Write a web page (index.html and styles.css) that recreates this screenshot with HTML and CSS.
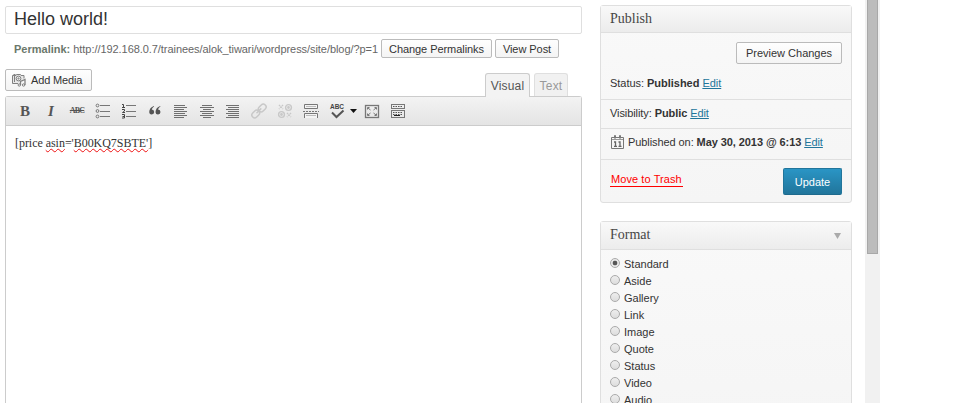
FILE: index.html
```html
<!DOCTYPE html>
<html lang="en">
<head>
<meta charset="utf-8">
<title>Edit Post</title>
<link rel="stylesheet" href="styles.css">
</head>
<body>
<div class="page">
  <main class="editor-column">
    <div class="post-title">Hello world!</div>
    <div class="permalink">
      <span class="permalink-text"><b>Permalink:</b> <span class="url">http://192.168.0.7/trainees/alok_tiwari/wordpress/site/blog/?p=1</span></span>
      <button class="button small change">Change Permalinks</button>
      <button class="button small view">View Post</button>
    </div>
    <div class="editor-tools">
      <button class="button add-media">
        <svg width="14" height="14" viewBox="0 0 14 14" fill="none" stroke="#808080"><path fill="#e8e8e8" d="M12 5.500v-3H9l-.5-1h-4l-.5 1H.500v8H6M1.500 1.500h2M2.500 3v6"/><circle cx="6.500" cy="5.500" r="2.400"/><circle cx="6.500" cy="5.500" r=".6"/><path stroke-width="1.300" d="M8.500 12V8.500l4.500-2V12"/><circle cx="7.300" cy="12" r="1.200"/><circle cx="11.600" cy="12" r="1.200"/></svg>
        <span>Add Media</span>
      </button>
      <div class="tabs">
        <div class="tab active">Visual</div>
        <div class="tab">Text</div>
      </div>
    </div>
    <section class="editor">
      <div class="toolbar">
        <span class="tool bold">B</span>
        <span class="tool italic">I</span>
        <span class="tool strike">ABC</span>
        <span class="tool"><svg width="16" height="16" viewBox="0 0 16 16" fill="none" stroke="#777"><circle cx="2.500" cy="2.500" r="1.400"/><circle cx="2.500" cy="8" r="1.400"/><circle cx="2.500" cy="13.500" r="1.400"/><path d="M5 2.500h10M5 8.500h10M5 13.500h10"/></svg></span>
        <span class="tool"><svg width="16" height="16" viewBox="0 0 16 16" fill="none" stroke="#777"><path d="M5 2.500h10M5 8.500h10M5 13.500h10"/><path stroke="#444" d="M1 1.500h1.500V4M1 4.500h3M1 6.500h2.500V8L1.500 9.500H4M1 11.500h2.500v3.500H1M1.500 13.500h2"/></svg></span>
        <span class="tool"><svg width="16" height="16" viewBox="0 0 16 16" fill="#555"><path d="M7 3C4 3.700 2.200 6.500 2.200 9.300a2.500 2.500 0 1 0 2.600-2.700C5 5.300 5.800 4.300 7 3.700zM13.300 3c-3 .7-4.800 3.500-4.800 6.300a2.500 2.500 0 1 0 2.600-2.700c.2-1.300 1-2.300 2.200-2.900z"/></svg></span>
        <span class="tool"><svg width="16" height="16" viewBox="0 0 16 16" stroke="#707070"><path d="M1 2.500h11M1 4.500h13M1 6.500h10M1 8.500h13M1 10.500h11M1 12.500h13M1 14.500h10"/></svg></span>
        <span class="tool"><svg width="16" height="16" viewBox="0 0 16 16" stroke="#707070"><path d="M3 2.500h10M1 4.500h14M4 6.500h8M1 8.500h14M3 10.500h10M1 12.500h14M4 14.500h8"/></svg></span>
        <span class="tool"><svg width="16" height="16" viewBox="0 0 16 16" stroke="#707070"><path d="M1 2.500h13M3 4.500h11M1 6.500h13M3 8.500h11M1 10.500h13M3 12.500h11M1 14.500h13"/></svg></span>
        <span class="tool"><svg width="16" height="16" viewBox="0 0 16 16" fill="none" stroke="#c8c8c8" stroke-width="1.500"><rect x="7" y="2.200" width="8.500" height="5.600" rx="2.800" transform="rotate(-45 11.200 5)"/><rect x=".5" y="8.200" width="8.500" height="5.600" rx="2.800" transform="rotate(-45 4.700 11)"/><path d="M5.500 10.200l4.800-4.800"/></svg></span>
        <span class="tool"><svg width="16" height="16" viewBox="0 0 16 16" fill="none" stroke="#c8c8c8" stroke-width="1.400"><circle cx="11.500" cy="4.500" r="2.900"/><circle cx="4.500" cy="11.500" r="2.900"/><circle cx="11.500" cy="4.500" r=".7"/><circle cx="4.500" cy="11.500" r=".7"/><path stroke-dasharray="1.500 1" d="M2 2l4 4M6 2L2 6M10 10l4 4M14 10l-4 4"/></svg></span>
        <span class="tool"><svg width="16" height="16" viewBox="0 0 16 16" fill="none" stroke="#777"><path fill="#f4f4f4" d="M1.500 5.500v-4h13v4zM1.500 15v-4.500h13V15"/><path stroke="#bbb" d="M3 3.500h10M3 12.500h10"/><path stroke-dasharray="2 1" d="M0 8.500h16"/></svg></span>
        <span class="tool"><svg width="16" height="16" viewBox="0 0 16 16" fill="none" stroke="#555" stroke-width="2"><text class="abc-label" x="1" y="6" textLength="14">ABC</text><path d="M3 9.500l4.500 4.500 7-6.500"/></svg></span>
        <span class="caret"></span>
        <span class="tool"><svg width="16" height="16" viewBox="0 0 16 16" fill="none" stroke="#777"><rect x="1.500" y="2.500" width="13" height="12" stroke-width="1.300"/><path d="M3.500 6.500v-2h2M10.500 4.500h2v2M3.500 10.500v2h2M10.500 12.500h2v-2M4 5l2.500 2M12 5L9.500 7M4 12l2.500-2M12 12l-2.500-2"/></svg></span>
        <span class="tool"><svg width="16" height="16" viewBox="0 0 16 16" fill="none" stroke="#777"><rect x="1.500" y="1.500" width="13" height="4"/><rect x="1.500" y="7.500" width="13" height="7"/><path stroke="#555" stroke-dasharray="1.500 1" d="M3 3.500h10M3 9.500h10M3 11.500h10"/><path stroke="#222" d="M4 12.500h6"/></svg></span>
      </div>
      <div class="content">[price <span class="misspelled">asin</span>='<span class="misspelled">B00KQ7SBTE'</span>]</div>
    </section>
  </main>
  <aside class="side-column">
    <section class="box publish">
      <h3>Publish</h3>
      <div class="row preview-row"><button class="button preview">Preview Changes</button></div>
      <div class="row status">Status: <b>Published</b> <a>Edit</a></div>
      <div class="row visibility">Visibility: <b>Public</b> <a>Edit</a></div>
      <div class="row date">
        <svg width="13" height="14" viewBox="0 0 13 14" fill="none" stroke="#777"><path d="M.5 2.500h12v11H.500z"/><path d="M1 4.500h11" stroke="#999"/><path d="M3.500 3.500v-3h1v3M8.500 3.500v-3h1v3"/><path stroke="#666" stroke-width="1.300" d="M3 7h1.500v4M3 11.400h3M7.500 7H9v4M7.500 11.400h3"/></svg>
        <span>Published on: <b>May 30, 2013 @ 6:13</b> <a>Edit</a></span>
      </div>
      <div class="actions"><a class="trash">Move to Trash</a><button class="update">Update</button></div>
    </section>
    <section class="box format">
      <h3>Format <i class="toggle"></i></h3>
      <div class="options">
        <label><i class="radio checked"></i>Standard</label>
        <label><i class="radio"></i>Aside</label>
        <label><i class="radio"></i>Gallery</label>
        <label><i class="radio"></i>Link</label>
        <label><i class="radio"></i>Image</label>
        <label><i class="radio"></i>Quote</label>
        <label><i class="radio"></i>Status</label>
        <label><i class="radio"></i>Video</label>
        <label><i class="radio"></i>Audio</label>
      </div>
    </section>
  </aside>
  <div class="scrollbar"><div class="thumb"></div></div>
</div>
</body>
</html>
```
FILE: styles.css
```css
* { box-sizing: border-box; }
body {
  margin: 0;
  overflow: hidden;
  background: #fff;
  color: #333;
  font: 11px/14px "Liberation Sans", Arial, sans-serif;
}
.page { display: flex; height: 403px; overflow: hidden; padding-left: 5px; }
.editor-column { display: flex; flex-direction: column; width: 577px; padding-top: 6px; }
.side-column { width: 252px; margin-left: 18px; padding-top: 5px; }

.post-title {
  height: 28px;
  padding: 0 8px;
  border: 1px solid #dfdfdf;
  border-radius: 2px;
  font-size: 18px;
  line-height: 24px;
}
.permalink { display: flex; height: 19px; margin-top: 5px; padding-left: 9px; color: #666; }
.permalink-text { width: 367px; line-height: 20px; white-space: nowrap; }
.permalink b { color: #6b786b; }
.url { letter-spacing: -0.06px; }

.button {
  padding: 0;
  border: 1px solid #bbb;
  border-radius: 2px;
  background: linear-gradient(#fefefe, #f4f4f4);
  color: #333;
  font: 11px/16px "Liberation Sans", Arial, sans-serif;
  white-space: nowrap;
}
.small { height: 19px; padding-top: 1px; line-height: 16px; letter-spacing: -0.06px; }
.change { width: 111px; }
.view { width: 64px; margin-left: 3px; }

.editor-tools { display: flex; justify-content: space-between; height: 27px; margin-top: 11px; }
.add-media { display: flex; align-items: center; width: 87px; height: 22px; padding-left: 6px; gap: 5px; letter-spacing: -0.15px; }
.tabs { display: flex; gap: 4px; padding: 4px 14px 0 0; }
.tab {
  width: 34px;
  height: 23px;
  border: 1px solid #dfdfdf;
  border-bottom: 0;
  border-radius: 3px 3px 0 0;
  background: #f1f1f1;
  color: #999;
  font-size: 12px;
  line-height: 24px;
  text-align: center;
  letter-spacing: 0.2px;
}
.tab.active { width: 45px; height: 24px; border-color: #ccc; background: #f3f3f3; color: #555; position: relative; z-index: 1; }

.editor { flex: 1; border: 1px solid #ccc; border-bottom: 0; border-radius: 3px 3px 0 0; }
.toolbar {
  display: flex;
  align-items: center;
  height: 29px;
  padding-left: 6px;
  border-bottom: 1px solid #ccc;
  background: linear-gradient(#f3f3f3, #e4e4e4);
}
.tool { display: flex; align-items: center; justify-content: center; width: 26px; height: 20px; color: #555; }
.tool svg { display: block; }
.bold, .italic { font: bold 15px/20px "Liberation Serif", serif; }
.italic { font-style: italic; }
.strike { font: bold 8px/20px "Liberation Serif", serif; text-decoration: line-through; letter-spacing: -0.8px; }
.abc-label { fill: #444; stroke: none; font: bold 6.5px "Liberation Sans", sans-serif; }
.caret { width: 7px; height: 4px; margin-right: 2px; background: #111; clip-path: polygon(0 0, 100% 0, 50% 100%); }
.content { padding: 9px 9px 0; font: 12px/16px "Liberation Serif", "Times New Roman", serif; letter-spacing: -0.04px; }
.misspelled { text-decoration: underline wavy #e11 1px; text-underline-offset: 1px; text-decoration-skip-ink: none; }

.box { border: 1px solid #dfdfdf; border-radius: 3px; background: linear-gradient(#f9f9f9, #f5f5f5); }
.box h3 {
  display: flex;
  align-items: center;
  justify-content: space-between;
  height: 28px;
  margin: 0;
  padding: 0 10px 1px 9px;
  border-bottom: 1px solid #dfdfdf;
  background: linear-gradient(#f9f9f9, #ececec);
  color: #464646;
  font: 14px/20px "Liberation Serif", Georgia, serif;
}
.publish { height: 198px; }
.publish h3 { height: 27px; }
.row { padding-left: 9px; border-bottom: 1px solid #dfdfdf; white-space: nowrap; letter-spacing: -0.03px; }
.row a { color: #21759b; text-decoration: underline; }
.preview-row { display: flex; justify-content: flex-end; height: 41px; padding: 9px 9px 0; border: 0; }
.preview { width: 106px; height: 22px; }
.status { height: 26px; padding-top: 2px; }
.visibility { height: 29px; padding-top: 6px; letter-spacing: -0.08px; }
.date { display: flex; gap: 4px; align-items: center; height: 31px; padding-bottom: 4px; letter-spacing: -0.08px; }
.date svg { margin-left: 1px; }
.actions { display: flex; justify-content: space-between; padding: 8px 9px 0; }
.trash { height: 15px; margin-top: 4px; padding: 0 1px; border-bottom: 1px solid #f00; color: #f00; letter-spacing: 0.08px; }
.update {
  width: 59px;
  height: 27px;
  padding: 0;
  border: 1px solid #21759b;
  border-bottom-color: #1e6a8d;
  border-radius: 2px;
  background: linear-gradient(#2a95c5, #21759b);
  color: #fff;
  font: 11px/24px "Liberation Sans", Arial, sans-serif;
}
.format { height: 220px; margin-top: 18px; }
.toggle { width: 7px; height: 6px; margin-top: 2px; background: #aaa; clip-path: polygon(0 0, 100% 0, 50% 100%); }
.options { padding: 6px 9px; }
.options label { display: flex; height: 17px; line-height: 17px; }
.radio {
  width: 10px;
  height: 10px;
  margin: 2px 4px 0 0;
  border: 1px solid #aaa;
  border-radius: 50%;
  background: linear-gradient(#eee, #ddd);
}
.checked { background: radial-gradient(circle, #555 0 2px, #e8e8e8 2.7px); }

.scrollbar { width: 15px; height: 403px; margin-left: 13px; padding-left: 2px; background: #f1f1f1; }
.thumb { width: 11px; height: 254px; border: 1px solid #a8a8a8; border-top: 0; background: #bcbcbc; }
```
